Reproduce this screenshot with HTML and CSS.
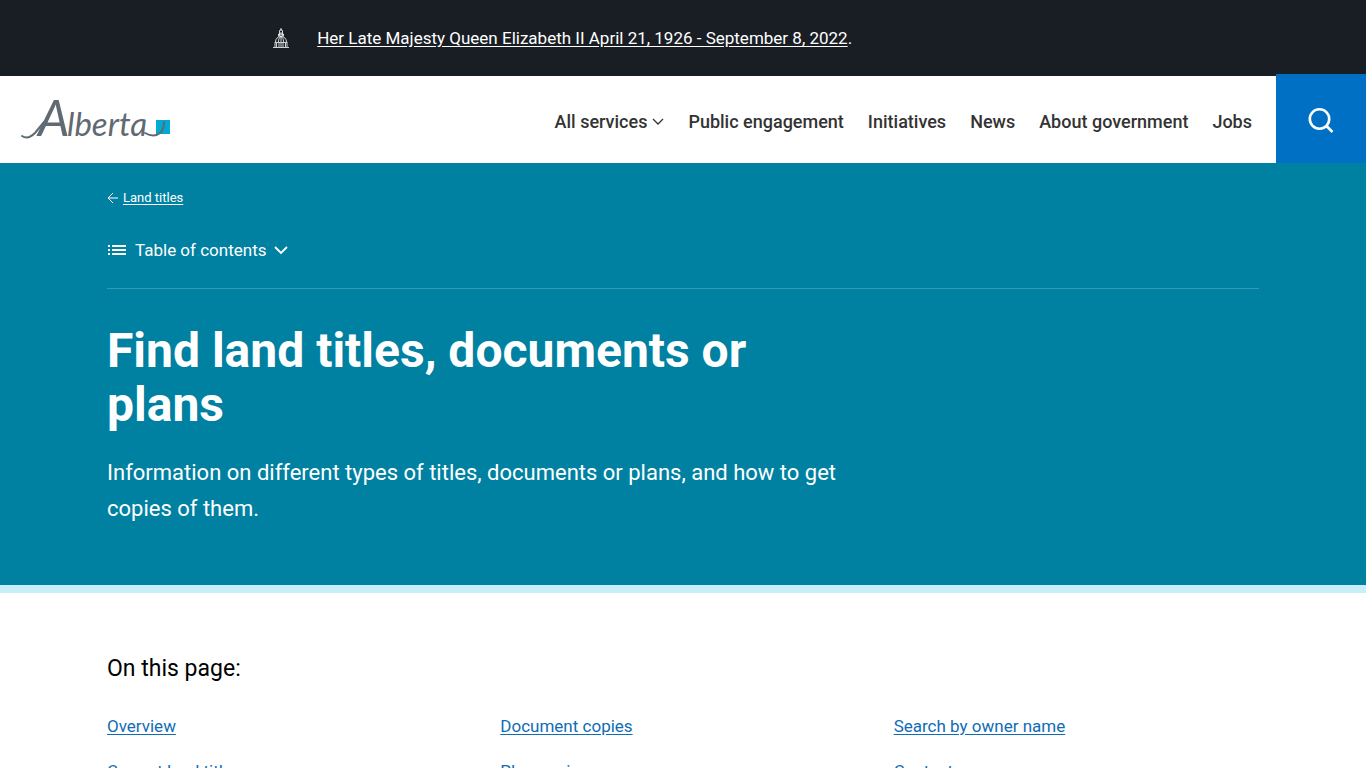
FILE: index.html
```
<!DOCTYPE html>
<html lang="en">
<head>
<meta charset="utf-8">
<meta name="viewport" content="width=device-width, initial-scale=1">
<title>Find land titles, documents or plans | Alberta.ca</title>
<link rel="stylesheet" href="styles.css">
</head>
<body>
<aside class="notice">
  <svg class="notice-icon" viewBox="0 0 16 22" width="16" height="22" fill="none" stroke="currentColor" stroke-width=".8" aria-hidden="true">
    <path d="M8 1v3M6.500 9V3.500q1.500-2 3 0V9M8 5v5M5.500 9.500V7h5v2.500M2.500 15c0-3 2-5.500 5.500-5.500s5.500 2.500 5.500 5.500M5.500 15c0-3 1-5 2.500-5.500 1.500.5 2.500 2.500 2.500 5.500M8 10v5M1.500 15.500h13M2 16v4M3.500 16v4M6 16v4M8 16v4M10 16v4M12.500 16v4M14 16v4M0 20.500h16"/>
  </svg>
  <p class="notice-text"><a href="#">Her Late Majesty Queen Elizabeth II April 21, 1926 - September 8, 2022</a>.</p>
</aside>
<header class="header">
  <a class="logo" href="#" aria-label="Alberta home">
    <svg viewBox="0 0 150 60" width="150" height="60" aria-hidden="true">
      <rect class="logo-square" x="136" y="30" width="14" height="14"/>
      <path class="logo-stroke" d="M2 46q6 4 13-3l9-11M125 43q9 5 15 0 4-3 4-11"/>
      <text class="logo-text" y="46"><tspan class="logo-cap" x="18">A</tspan><tspan x="47">lberta</tspan></text>
    </svg>
  </a>
  <nav class="nav" aria-label="Main">
    <a href="#">All services
      <svg viewBox="0 0 12 8" width="12" height="8" fill="none" stroke="currentColor" stroke-width="1.300" aria-hidden="true"><path d="M1 1l5 5 5-5"/></svg>
    </a>
    <a href="#">Public engagement</a>
    <a href="#">Initiatives</a>
    <a href="#">News</a>
    <a href="#">About government</a>
    <a href="#">Jobs</a>
  </nav>
  <button class="search" type="button" aria-label="Search">
    <svg viewBox="0 0 26 26" width="26" height="26" fill="none" stroke="currentColor" stroke-width="2.600" aria-hidden="true"><circle cx="11.500" cy="12" r="9.700"/><path d="M18.500 19l6 6"/></svg>
  </button>
</header>
<main>
  <section class="hero">
    <div class="container">
      <div class="crumb">
        <svg viewBox="0 0 12 12" width="12" height="12" fill="none" stroke="currentColor" aria-hidden="true"><path d="M11 6H1M6 1L1 6l5 5"/></svg>
        <a href="#">Land titles</a>
      </div>
      <div class="toc-row">
        <button class="toc" type="button">
          <svg viewBox="0 0 20 12" width="20" height="12" fill="currentColor" aria-hidden="true"><path d="M1 1h2v2H1zM5 1h14v2H5zM1 5h2v2H1zM5 5h14v2H5zM1 9h2v2H1zM5 9h14v2H5z"/></svg>
          <span>Table of contents</span>
          <svg viewBox="0 0 14 10" width="14" height="10" fill="none" stroke="currentColor" stroke-width="1.800" aria-hidden="true"><path d="M1 2l6 6 6-6"/></svg>
        </button>
      </div>
      <h1 class="title">Find land titles, documents or plans</h1>
      <p class="lead">Information on different types of titles, documents or plans, and how to get copies of them.</p>
    </div>
  </section>
  <section class="container contents">
    <h2 class="contents-title">On this page:</h2>
    <ul class="links">
      <li><a href="#">Overview</a></li>
      <li><a href="#">Document copies</a></li>
      <li><a href="#">Search by owner name</a></li>
      <li><a href="#">Current land titles</a></li>
      <li><a href="#">Plan copies</a></li>
      <li><a href="#">Contact</a></li>
    </ul>
  </section>
</main>
</body>
</html>
```
FILE: styles.css
```
* { box-sizing: border-box; }
body {
  margin: 0;
  background: #fff;
  color: #000;
  font: 17px/28px Roboto, "Liberation Sans", sans-serif;
}
h1, h2, p, ul { margin: 0; padding: 0; }
button { border: 0; padding: 0; background: none; color: inherit; font: inherit; cursor: pointer; }
svg { display: block; flex: none; }

.notice {
  display: flex;
  align-items: center;
  gap: 28px;
  padding: 24px 20%;
  background: #191e24;
  color: #fff;
}
.notice-text { white-space: nowrap; }
.notice-text a { color: inherit; text-underline-offset: 2px; }

.header { display: flex; align-items: center; }
.logo { margin: 0 auto 0 20px; }
.logo-square { fill: #00aad2; }
.logo-stroke { fill: none; stroke: #5f6a72; stroke-width: 2; stroke-linecap: round; }
.logo-text { fill: #5f6a72; font: italic 33px Lato, sans-serif; }
.logo-cap { font-size: 50px; }
.nav { display: flex; gap: 24px; padding: 4px 24px 0; font-size: 18px; }
.nav a {
  display: flex;
  align-items: center;
  gap: 5px;
  color: #333;
  font-weight: 500;
  text-decoration: none;
  white-space: nowrap;
}
.search {
  display: grid;
  place-items: center;
  width: 90px;
  height: 89px;
  margin-top: -2px;
  padding-top: 2px;
  background: #0070c4;
  color: #fff;
}

.hero {
  padding: 23px 0 58px;
  border-bottom: 8px solid #c8eef9;
  background: #0081a2;
  color: #fff;
}
.container { width: calc(100% - 48px); max-width: 1152px; margin: 0 auto; }
.crumb { display: flex; align-items: center; gap: 4px; font-size: 13px; line-height: 24px; }
.crumb a { color: inherit; text-underline-offset: 2px; }
.toc-row { padding: 26px 0 24px; border-bottom: 1px solid #339ab5; }
.toc { display: flex; align-items: center; gap: 8px; }
.title { max-width: 700px; margin-top: 35px; font-size: 48px; line-height: 54px; font-weight: 700; }
.lead { max-width: 768px; margin-top: 23px; font-size: 22px; line-height: 36px; }

.contents { padding: 60px 0; }
.contents-title { font-size: 23px; line-height: 32px; font-weight: 400; }
.links {
  display: grid;
  grid-template-columns: repeat(3, 1fr);
  gap: 17px 28px;
  margin-top: 27px;
  list-style: none;
}
.links a { color: #0f6cb5; text-underline-offset: 2px; }
```
